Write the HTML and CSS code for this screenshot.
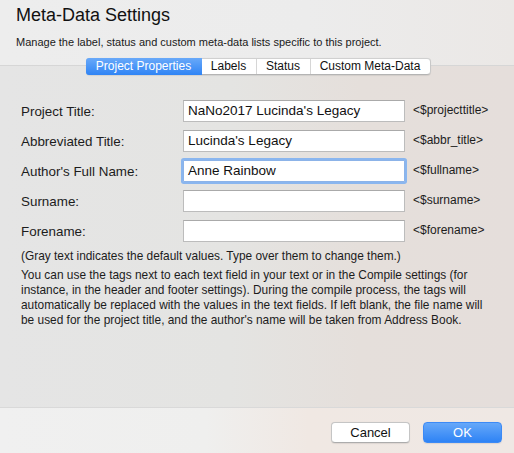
FILE: index.html
```html
<!DOCTYPE html>
<html>
<head>
<meta charset="utf-8">
<link rel="stylesheet" href="styles.css">
</head>
<body>
<div class="window">
  <header class="header">
    <h1 class="title">Meta-Data Settings</h1>
    <p class="subtitle">Manage the label, status and custom meta-data lists specific to this project.</p>
  </header>
  <main class="panel">
    <nav class="tabs">
      <span class="tab active">Project Properties</span>
      <span class="tab">Labels</span>
      <span class="tab">Status</span>
      <span class="tab last">Custom Meta-Data</span>
    </nav>
    <div class="form">
      <label class="label">Project Title:</label>
      <div class="field">NaNo2017 Lucinda's Legacy</div>
      <span class="tag">&lt;$projecttitle&gt;</span>

      <label class="label">Abbreviated Title:</label>
      <div class="field">Lucinda's Legacy</div>
      <span class="tag">&lt;$abbr_title&gt;</span>

      <label class="label">Author's Full Name:</label>
      <div class="field focus">Anne Rainbow</div>
      <span class="tag">&lt;$fullname&gt;</span>

      <label class="label">Surname:</label>
      <div class="field"></div>
      <span class="tag">&lt;$surname&gt;</span>

      <label class="label">Forename:</label>
      <div class="field"></div>
      <span class="tag">&lt;$forename&gt;</span>
    </div>
    <p class="note">(Gray text indicates the default values. Type over them to change them.)</p>
    <p class="para">You can use the tags next to each text field in your text or in the Compile settings (for instance, in the header and footer settings). During the compile process, the tags will automatically be replaced with the values in the text fields. If left blank, the file name will be used for the project title, and the author's name will be taken from Address Book.</p>
  </main>
  <footer class="footer">
    <button class="btn">Cancel</button>
    <button class="btn primary">OK</button>
  </footer>
</div>
</body>
</html>
```
FILE: styles.css
```css
* { box-sizing: border-box; }
html, body {
  margin: 0;
  padding: 0;
}
body {
  font-family: "Liberation Sans", Arial, sans-serif;
  color: #1c1c1c;
  background: #ececec;
  width: 514px;
  height: 453px;
  overflow: hidden;
}
.window {
  display: flex;
  flex-direction: column;
  height: 453px;
}
.header {
  height: 65px;
  padding: 4px 16px 0;
  background: linear-gradient(90deg, #ededed 0%, #ececec 60%, #ebe8e6 100%);
}
.title {
  margin: 0;
  font-size: 18px;
  font-weight: normal;
  line-height: 22px;
  color: #111;
}
.subtitle {
  margin: 10px 0 0;
  font-size: 11px;
  line-height: 13px;
  color: #1a1a1a;
}
.panel {
  height: 342px;
  border-top: 1px solid #d6d6d6;
  background: linear-gradient(90deg, #e5e5e5 0%, #e4e4e2 45%, #e5dfdb 70%, #e5dedb 100%);
  display: flex;
  flex-direction: column;
}
.tabs {
  display: flex;
  align-self: center;
  margin-top: -8px;
  height: 17px;
  background: #fff;
  border: 1px solid #c8c8c8;
  border-top-color: #d0d0d0;
  border-bottom-color: #b4b4b4;
  border-radius: 4px;
  margin-left: 2px;
  box-shadow: 0 0.5px 1px rgba(0,0,0,0.08);
}
.tab {
  font-size: 12px;
  line-height: 15px;
  padding: 0 10px;
  color: #111;
  border-left: 1px solid #d6d6d6;
  white-space: nowrap;
}
.tab:first-child { border-left: none; }
.tab.active {
  width: 116px;
  padding: 0;
  text-align: center;
  color: #fff;
  background: linear-gradient(#69a9f9, #2f84f5);
  border-radius: 3px 0 0 3px;
  margin: -1px 0 -1px -1px;
  line-height: 17px;
}
.tab:nth-child(2) { width: 54px; text-align: center; padding: 0; border-left: none; }
.tab:nth-child(3) { width: 54px; text-align: center; padding: 0; }
.tab.last { width: 120px; text-align: center; padding: 0; }
.form {
  display: grid;
  grid-template-columns: 154px 222px auto;
  column-gap: 8px;
  row-gap: 8px;
  grid-auto-rows: 22px;
  align-items: center;
  margin: 25px 0 0 21px;
}
.label {
  font-size: 13.4px;
  color: #1c1c1c;
}
.field {
  height: 22px;
  background: #fff;
  border: 1px solid #bcbcbc;
  border-top-color: #aaaaaa;
  font-size: 13.5px;
  line-height: 20px;
  padding-left: 4px;
  color: #111;
}
.field.focus {
  border-color: #8cb3e8;
  box-shadow: 0 0 0 2px #8ab6ef;
  border-radius: 1px;
}
.tag {
  font-size: 12px;
  color: #1c1c1c;
  margin-top: -3px;
}
.note {
  margin: 7px 0 0 21px;
  font-size: 11.9px;
  line-height: 14px;
  color: #1c1c1c;
}
.para {
  margin: 5px 18px 0 21px;
  font-size: 11.9px;
  line-height: 15px;
  color: #1c1c1c;
}
.footer {
  flex: 1;
  border-top: 1px solid #d9d9d9;
  background: linear-gradient(90deg, #f0f0f0 0%, #efefee 40%, #f0e8e3 60%, #efe8e4 100%);
  display: flex;
  justify-content: flex-end;
  align-items: flex-start;
  gap: 13px;
  padding: 14px 12px 0 0;
}
.btn {
  width: 79px;
  height: 21px;
  font-family: "Liberation Sans", Arial, sans-serif;
  font-size: 13px;
  line-height: 19px;
  padding: 0;
  border-radius: 4px;
  background: #fff;
  border: 1px solid #c5c5c5;
  border-bottom-color: #acacac;
  color: #111;
  box-shadow: 0 0.5px 1px rgba(0,0,0,0.08);
}
.btn.primary {
  color: #fff;
  border: 1px solid #3c8af6;
  background: linear-gradient(#66a8f9, #2e83f5);
}
```
